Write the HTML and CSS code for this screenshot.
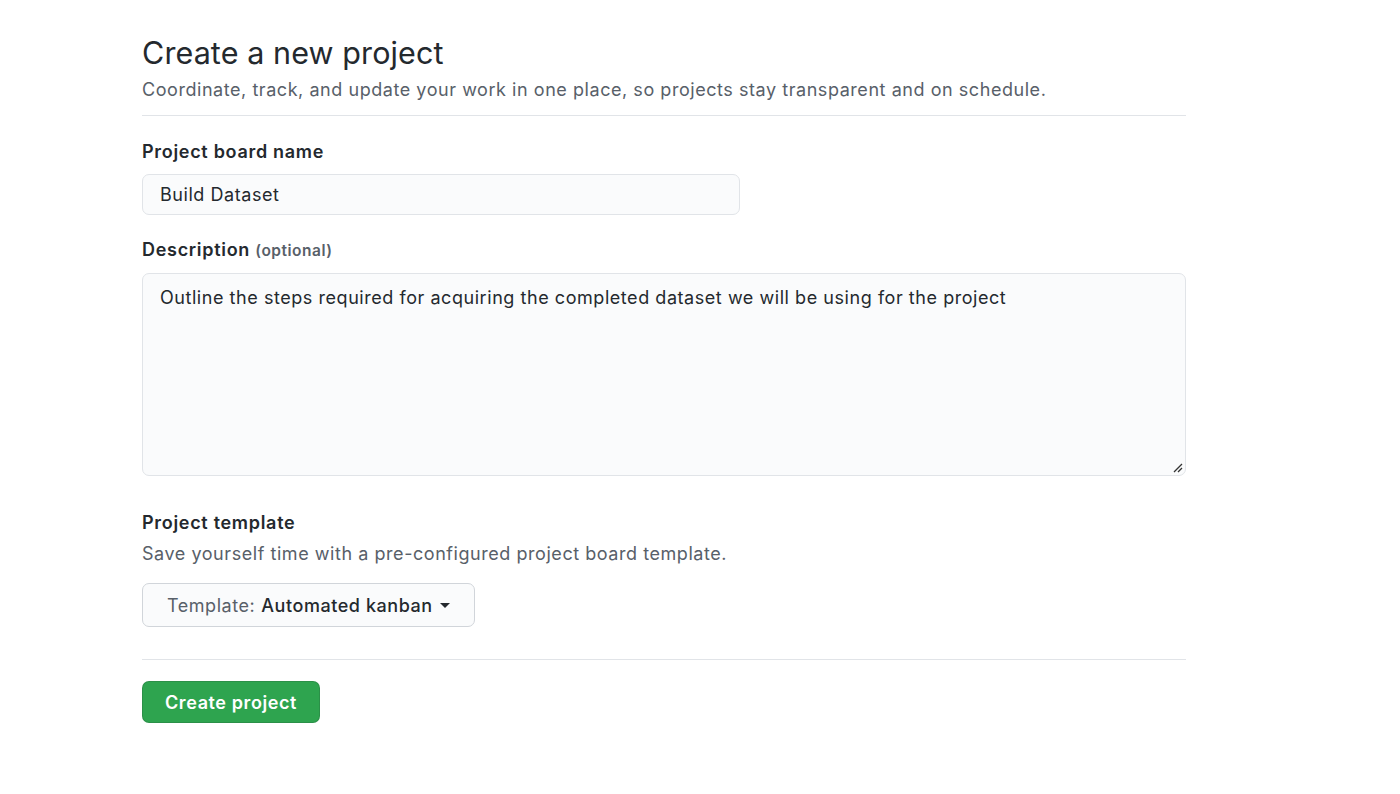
FILE: index.html
```html
<!DOCTYPE html>
<html>
<head>
<meta charset="utf-8">
<link rel="stylesheet" href="styles.css">
</head>
<body>
<main class="page">
  <header class="subhead">
    <h1 class="subhead-title">Create a new project</h1>
    <p class="subhead-desc">Coordinate, track, and update your work in one place, so projects stay transparent and on schedule.</p>
  </header>
  <form class="form">
    <div class="group">
      <label class="label">Project board name</label>
      <div class="input">Build Dataset</div>
    </div>
    <div class="group">
      <label class="label">Description <span class="optional">(optional)</span></label>
      <div class="textarea">
        <span>Outline the steps required for acquiring the completed dataset we will be using for the project</span>
        <svg class="grip" width="12" height="12" viewBox="0 0 12 12"><path d="M11 3 L3 11 M11 7 L7 11" stroke="#333" stroke-width="1.3" fill="none"/></svg>
      </div>
    </div>
    <div class="group template">
      <label class="label">Project template</label>
      <p class="note">Save yourself time with a pre-configured project board template.</p>
      <button type="button" class="select">Template: <strong>Automated kanban</strong><span class="caret"></span></button>
    </div>
    <div class="actions">
      <button type="button" class="primary">Create project</button>
    </div>
  </form>
</main>
</body>
</html>
```
FILE: styles.css
```css
* { box-sizing: border-box; }
body {
  margin: 0;
  background: #fff;
  font-family: Inter, "Noto Sans", sans-serif;
  color: #24292e;
}
.page {
  width: 1044px;
  margin-left: 142px;
  padding-top: 34px;
}
.subhead {
  border-bottom: 1px solid #e1e4e8;
  padding-bottom: 12px;
}
.subhead-title {
  margin: 0;
  font-size: 30.5px;
  font-weight: 400;
  letter-spacing: 0.1px;
  line-height: 38px;
}
.subhead-desc {
  margin: 5px 0 0;
  font-size: 18px;
  letter-spacing: 0.55px;
  line-height: 26px;
  color: #586069;
}
.form { padding-top: 23px; }
.group { margin-bottom: 22px; }
.label {
  display: block;
  font-size: 18px;
  letter-spacing: 0.7px;
  font-weight: 600;
  line-height: 26px;
  margin-bottom: 9px;
}
.optional {
  font-size: 15.5px;
  letter-spacing: 0.5px;
  color: #586069;
}
.input {
  width: 598px;
  height: 41px;
  border: 1px solid #e1e4e8;
  border-radius: 7px;
  background: #fafbfc;
  padding: 0 17px;
  font-size: 18px;
  letter-spacing: 0.55px;
  line-height: 39px;
}
.textarea {
  position: relative;
  height: 203px;
  border: 1px solid #e1e4e8;
  border-radius: 7px;
  background: #fafbfc;
  padding: 11px 17px;
  font-size: 18px;
  letter-spacing: 0.55px;
  line-height: 26px;
}
.grip { position: absolute; right: 2px; bottom: 2px; }
.template { margin-top: 34px; }
.template .label { margin-bottom: 5px; }
.note {
  margin: 0 0 16px;
  font-size: 18px;
  letter-spacing: 0.55px;
  line-height: 26px;
  color: #586069;
}
.select {
  display: inline-flex;
  align-items: center;
  height: 44px;
  padding: 0 24px;
  border: 1px solid #d1d5da;
  border-radius: 7px;
  background: #fafbfc;
  font-family: inherit;
  font-size: 18px;
  letter-spacing: 0.55px;
  color: #586069;
}
.select strong { color: #24292e; font-weight: 500; margin-left: 6px; }
.caret {
  display: inline-block;
  margin-left: 7px;
  border-top: 5px solid #24292e;
  border-left: 5px solid transparent;
  border-right: 5px solid transparent;
}
.actions {
  border-top: 1px solid #e1e4e8;
  margin-top: 32px;
  padding-top: 21px;
}
.primary {
  height: 42px;
  padding: 0 22px;
  border: 1px solid rgba(27,31,35,.15);
  border-radius: 7px;
  background: #2ea44f;
  color: #fff;
  font-family: inherit;
  font-size: 18px;
  letter-spacing: 0.6px;
  font-weight: 600;
}
```
